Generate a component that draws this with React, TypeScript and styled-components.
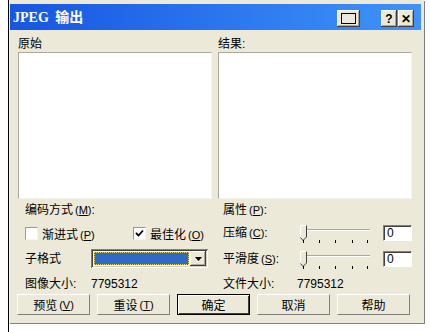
import React from 'react'
import styled, {createGlobalStyle, css} from 'styled-components'

const GlobalStyle = createGlobalStyle`
  html, body {
    margin: 0;
    padding: 0;
    background: #fff;
  }
  body {
    font-family: 'Liberation Sans', 'Noto Sans CJK SC', sans-serif;
    font-size: 12px;
    color: #000;
  }
`

const Page = styled.div`
  width: 430px;
  height: 332px;
  overflow: hidden;
  padding-left: 8px;
  box-sizing: border-box;
  background: #fff;
`

const Stage = styled.div`
  height: 332px;
  border-left: 1px solid #000;
`

const Window = styled.div`
  width: 411px;
  background: #ece9d8;
  border-top: 4px solid #ece9d8;
  border-left: 1px solid #f5f3ea;
  border-right: 3px solid #ece9d8;
  border-bottom: 1px solid #ece9d8;
  box-shadow: 1px 1px 0 #808080;
`

const TitleBar = styled.div`
  height: 26px;
  display: flex;
  align-items: center;
  padding: 0 7px 0 3px;
  background: linear-gradient(to right, #1656e2, #3f93f9);
`

const TitleText = styled.div`
  flex: 1;
  font-family: 'Liberation Serif', 'Noto Sans CJK SC', serif;
  font-weight: bold;
  font-size: 14px;
  color: #fff;
  padding-bottom: 2px;
  word-spacing: 3px;
`

const CaptionButtons = styled.div`
  display: flex;
  align-self: flex-end;
  margin-bottom: 3px;
  gap: 1px;
`

const CaptionButton = styled.div<{$wide?: boolean}>`
  width: ${(p) => (p.$wide ? 23 : 16)}px;
  height: 17px;
  margin-right: ${(p) => (p.$wide ? 20 : 0)}px;
  box-sizing: border-box;
  display: flex;
  align-items: center;
  justify-content: center;
  background: #ece9d8;
  box-shadow: inset -1px -1px #404040, inset 1px 1px #fff,
    inset -2px -2px #aca899;
  font: bold 12px 'Liberation Sans', sans-serif;
  color: #000;
`

const SquareGlyph = styled.div`
  width: 15px;
  height: 11px;
  margin-bottom: 1px;
  border: 1px solid #000;
  box-sizing: border-box;
`

const Body = styled.div`
  height: 292px;
  box-sizing: border-box;
  padding: 7px 9px 0 8px;
  display: flex;
  flex-direction: column;
`

const TwoColumns = styled.div`
  display: grid;
  grid-template-columns: 194px 194px;
  column-gap: 6px;
`

const PaneLabel = styled.div`
  height: 15px;
  line-height: 14px;
`

const PreviewBox = styled.div`
  height: 147px;
  box-sizing: border-box;
  background: #fff;
  border: 1px solid;
  border-color: #aca899 #f4f3ee #f4f3ee #aca899;
`

const LeftPanel = styled.div`
  display: grid;
  grid-template-columns: 66px 1fr;
  grid-template-rows: 20px 26px 25px 23px;
  align-items: center;
  padding-left: 7px;
  margin-top: 1px;
`

const RightPanel = styled.div`
  display: grid;
  grid-template-columns: 74px 76px 1fr 29px;
  grid-template-rows: 20px 26px 25px 23px;
  align-items: center;
  padding-left: 5px;
  margin-top: 1px;
`

const Text = styled.div<{$span?: number; $shift?: number}>`
  grid-column: span ${(p) => p.$span || 1};
  line-height: 14px;
  white-space: nowrap;
  padding-top: ${(p) => p.$shift || 0}px;
`

const Key = styled.span`
  font-size: 11px;
  margin-left: 2px;
  u {
    text-decoration: underline;
    text-underline-offset: 1px;
  }
`

const CheckRow = styled.div`
  grid-column: span 2;
  display: flex;
  align-items: center;
`

const CheckItem = styled.div<{$width?: number}>`
  display: flex;
  align-items: center;
  gap: 4px;
  width: ${(p) => (p.$width ? `${p.$width}px` : 'auto')};
`

const CheckBox = styled.div`
  width: 13px;
  height: 13px;
  box-sizing: border-box;
  background: #fff;
  border: 1px solid;
  border-color: #9d9a8a #f4f3ee #f4f3ee #9d9a8a;
  display: flex;
  align-items: center;
  justify-content: center;
`

const Combo = styled.div`
  width: 117px;
  height: 19px;
  box-sizing: border-box;
  display: flex;
  padding: 2px;
  background: #ece9d8;
  box-shadow: inset 1px 1px #808080, inset -1px -1px #fff,
    inset 2px 2px #404040, inset -2px -2px #d4d0c8;
`

const ComboField = styled.div`
  flex: 1;
  background: #fff;
  padding: 1px;
  display: flex;
`

const ComboSelection = styled.div`
  flex: 1;
  background: #316ac5;
  outline: 1px dotted #e8d870;
  outline-offset: -1px;
`

const DropButton = styled.div`
  width: 16px;
  display: flex;
  align-items: center;
  justify-content: center;
  background: #ece9d8;
  box-shadow: inset -1px -1px #404040, inset 1px 1px #fff,
    inset -2px -2px #aca899;
`

const NumberBox = styled.div`
  grid-column: 4;
  height: 16px;
  box-sizing: border-box;
  background: #fff;
  border: 1px solid;
  border-color: #808080 #fff #fff #808080;
  box-shadow: inset 1px 1px #404040;
  padding: 1px 0 0 3px;
  line-height: 13px;
  font-size: 12px;
`

const ButtonRow = styled.div`
  display: flex;
  gap: 7px;
  margin-left: -1px;
`

const PushButton = styled.div<{$default?: boolean}>`
  width: 73px;
  height: 21px;
  box-sizing: border-box;
  display: flex;
  align-items: center;
  justify-content: center;
  background: #ece9d8;
  border: 1px solid;
  border-color: #fff #808080 #808080 #fff;
  ${(p) =>
    p.$default &&
    css`
      border-color: #000;
      box-shadow: inset 1px 1px #fff, inset -1px -1px #404040;
    `}
`

const Mnemonic = ({k}: {k: string}) => (
  <Key>
    (<u>{k}</u>)
  </Key>
)

const Slider = () => (
  <svg width="76" height="22" viewBox="0 0 76 22">
    <line x1="4" y1="7.5" x2="73" y2="7.5" stroke="#aca899" />
    <line x1="4" y1="8.5" x2="73" y2="8.5" stroke="#fff" />
    <polygon points="3,3 10,3 10,15 6,19 3,15" fill="#ece9d8" />
    <polyline points="3.5,15 3.5,3.5 9.5,3.5" fill="none" stroke="#fff" />
    <polyline points="9.5,3.5 9.5,15 6,18.5 3.5,15.5" fill="none" stroke="#404040" />
    {[6, 22, 38, 55, 70].map((x) => (
      <line key={x} x1={x + 0.5} y1="18" x2={x + 0.5} y2="21" stroke="#000" />
    ))}
  </svg>
)

const CheckMark = () => (
  <svg width="9" height="9" viewBox="0 0 9 9">
    <polyline points="1,4 3.5,6.5 8,1.5" fill="none" stroke="#000" strokeWidth="1.8" />
  </svg>
)

const DownArrow = () => (
  <svg width="7" height="4" viewBox="0 0 7 4">
    <polygon points="0,0 7,0 3.5,4" fill="#000" />
  </svg>
)

export default function App() {
  return (
    <Page>
      <GlobalStyle />
      <Stage>
        <Window>
          <TitleBar>
            <TitleText>JPEG 输出</TitleText>
            <CaptionButtons>
              <CaptionButton $wide>
                <SquareGlyph />
              </CaptionButton>
              <CaptionButton>?</CaptionButton>
              <CaptionButton>✕</CaptionButton>
            </CaptionButtons>
          </TitleBar>
          <Body>
            <TwoColumns>
              <div>
                <PaneLabel>原始</PaneLabel>
                <PreviewBox />
              </div>
              <div>
                <PaneLabel>结果:</PaneLabel>
                <PreviewBox />
              </div>
            </TwoColumns>
            <TwoColumns>
              <LeftPanel>
                <Text $span={2}>
                  编码方式<Mnemonic k="M" />:
                </Text>
                <CheckRow>
                  <CheckItem $width={108}>
                    <CheckBox />
                    <span>
                      渐进式<Mnemonic k="P" />
                    </span>
                  </CheckItem>
                  <CheckItem>
                    <CheckBox>
                      <CheckMark />
                    </CheckBox>
                    <span>
                      最佳化<Mnemonic k="O" />
                    </span>
                  </CheckItem>
                </CheckRow>
                <Text>子格式</Text>
                <Combo>
                  <ComboField>
                    <ComboSelection />
                  </ComboField>
                  <DropButton>
                    <DownArrow />
                  </DropButton>
                </Combo>
                <Text $shift={3}>图像大小:</Text>
                <Text $shift={3}>7795312</Text>
              </LeftPanel>
              <RightPanel>
                <Text $span={4}>
                  属性<Mnemonic k="P" />:
                </Text>
                <Text>
                  压缩<Mnemonic k="C" />:
                </Text>
                <Slider />
                <NumberBox>0</NumberBox>
                <Text>
                  平滑度<Mnemonic k="S" />:
                </Text>
                <Slider />
                <NumberBox>0</NumberBox>
                <Text $shift={3}>文件大小:</Text>
                <Text $span={3} $shift={3}>
                  7795312
                </Text>
              </RightPanel>
            </TwoColumns>
            <ButtonRow>
              <PushButton>
                预览<Mnemonic k="V" />
              </PushButton>
              <PushButton>
                重设<Mnemonic k="T" />
              </PushButton>
              <PushButton $default>确定</PushButton>
              <PushButton>取消</PushButton>
              <PushButton>帮助</PushButton>
            </ButtonRow>
          </Body>
        </Window>
      </Stage>
    </Page>
  )
}
